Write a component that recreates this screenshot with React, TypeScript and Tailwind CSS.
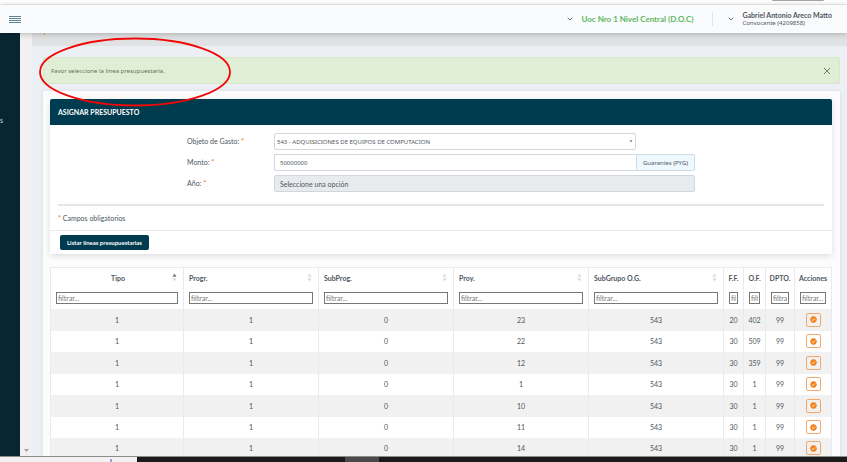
import { useState } from "react";

type Row = { ff: string; of: string; proy: string };

const rows: Row[] = [
  { proy: "23", ff: "20", of: "402" },
  { proy: "22", ff: "30", of: "509" },
  { proy: "12", ff: "30", of: "359" },
  { proy: "1", ff: "30", of: "1" },
  { proy: "10", ff: "30", of: "1" },
  { proy: "11", ff: "30", of: "1" },
  { proy: "14", ff: "30", of: "1" },
];

const columns = [
  { name: "Tipo", width: "w-[133px]", sort: "asc" },
  { name: "Progr.", width: "", sort: "none" },
  { name: "SubProg.", width: "", sort: "none" },
  { name: "Proy.", width: "", sort: "none" },
  { name: "SubGrupo O.G.", width: "", sort: "none" },
  { name: "F.F.", width: "w-5", sort: "" },
  { name: "O.F.", width: "w-[22px]", sort: "" },
  { name: "DPTO.", width: "w-[29px]", sort: "" },
  { name: "Acciones", width: "w-[37px]", sort: "" },
];

function Chevron() {
  return (
    <svg viewBox="0 0 6 4" className="h-1 w-1.5" fill="none" stroke="#6b7580" strokeWidth="1">
      <path d="M0.7 0.7 L3 3 L5.3 0.7" />
    </svg>
  );
}

function SortIcon({ active }: { active: boolean }) {
  return (
    <svg viewBox="0 0 5 9" className="h-[9px] w-[5px] shrink-0">
      <path d="M2.5 0.5 L4.5 3.8 H0.5 Z" fill={active ? "#6c757d" : "#dcdcdc"} />
      <path d="M2.5 8.5 L4.5 5.2 H0.5 Z" fill="#dcdcdc" />
    </svg>
  );
}

function CheckIcon() {
  return (
    <svg viewBox="0 0 14 14" className="h-[7px] w-[7px]">
      <path
        d="M7 0 L9.2 1 L11.7 1.8 L12.8 4.4 L14 7 L12.8 9.6 L11.7 12.2 L9.2 13 L7 14 L4.8 13 L2.3 12.2 L1.2 9.6 L0 7 L1.2 4.4 L2.3 1.8 L4.8 1 Z"
        fill="#f5821f"
      />
      <path d="M4 7.2 L6.2 9.3 L10.2 5" stroke="#fff" strokeWidth="1.5" fill="none" />
    </svg>
  );
}

function Label({ text, htmlFor }: { text: string; htmlFor: string }) {
  return (
    <label htmlFor={htmlFor} className="self-center font-['Lato',sans-serif] text-[7px] leading-2">
      {text}: <span className="font-bold text-[#f5821f]">*</span>
    </label>
  );
}

export default function App() {
  const [monto, setMonto] = useState("50000000");

  return (
    <div className="relative flex h-screen flex-col overflow-hidden bg-white font-['Noto_Sans','Open_Sans',sans-serif] text-[6px] leading-2 text-[#4f565e]">
      <div className="flex h-[5px] shrink-0 justify-end border-b border-[#f0f0f1] pr-[23px]">
        <div className="h-px w-[52px] rounded-b bg-[#a5a5a8]" />
      </div>

      <header className="z-10 flex h-7 shrink-0 items-center bg-[#fafbfd] pr-[15px] pl-[9px] shadow-[0_1px_6px_rgba(0,0,0,0.25)]">
        <button aria-label="Menú" className="flex w-3 flex-col gap-px">
          <span className="h-px bg-[#5f8494]" />
          <span className="h-px bg-[#5f8494]" />
          <span className="h-px bg-[#5f8494]" />
          <span className="h-px bg-[#5f8494]" />
        </button>
        <button className="ml-auto flex items-center gap-2 font-['Lato',sans-serif] text-[8px] font-bold text-[#5cb860]">
          <Chevron />
          Uoc Nro 1 Nivel Central (D.O.C)
        </button>
        <div className="ml-[19px] h-[14px] w-px bg-[#e0e3e8]" />
        <button className="ml-[15px] flex items-center gap-2 text-left">
          <Chevron />
          <span>
            <span className="block font-['Lato',sans-serif] text-[7px] leading-2 font-bold">
              Gabriel Antonio Areco Matto
            </span>
            <span className="block">Convocante (4209858)</span>
          </span>
        </button>
      </header>

      <div className="flex min-h-0 flex-1">
        <aside className="w-5 shrink-0 bg-[#082632] pt-[83px] text-[#d5dde1]">
          <p className="font-['Lato',sans-serif] text-[7px] leading-2">s</p>
        </aside>
        <div className="flex w-3 shrink-0 flex-col items-center justify-end bg-[#f1f1f1] pb-1">
          <svg viewBox="0 0 5 3" className="h-[3px] w-[5px]">
            <path d="M0 0 H5 L2.5 3 Z" fill="#a3a3a3" />
          </svg>
        </div>

        <main className="min-w-0 flex-1 overflow-hidden bg-[#ecf0f4]">
          <div className="h-[13px] bg-[#e1e2e4] pl-3">
            <div className="h-0.5 w-px bg-[#f5a25a]" />
          </div>

          <div className="mt-[11px] mr-[7px] ml-[11px]">
            <div className="flex h-[27px] items-center justify-between rounded-xs border border-[#d8e7ca] bg-[#e1eed6] pr-2 pl-[7px] text-[#5c7351]">
              <p>Favor seleccione la línea presupuestaria.</p>
              <button aria-label="Cerrar">
                <svg viewBox="0 0 8 8" className="h-2 w-2" stroke="#6f7d69" strokeWidth="1">
                  <path d="M1 1 L7 7 M7 1 L1 7" />
                </svg>
              </button>
            </div>

            <section className="mt-[7px] rounded-xs bg-[#fcfcfd] p-2 pl-[7px] shadow-[0_0_4px_rgba(0,0,0,0.08)]">
              <form className="bg-white shadow-[0_2px_6px_rgba(0,0,0,0.12)]" onSubmit={(e) => e.preventDefault()}>
                <h1 className="flex h-[26px] items-center rounded-t-xs bg-[#003c50] px-2 font-['Lato',sans-serif] text-[7px] leading-2 font-bold text-white">
                  ASIGNAR PRESUPUESTO
                </h1>

                <div className="grid grid-cols-[137fr_87fr_421fr_137fr] gap-y-1 pt-2">
                  <div className="col-start-2 self-center">
                    <Label text="Objeto de Gasto" htmlFor="objeto" />
                  </div>
                  <div className="grid w-[86%] items-center">
                    <select
                      id="objeto"
                      className="col-start-1 row-start-1 h-[17px] appearance-none rounded-xs border border-[#d3d8de] bg-white px-0.5"
                    >
                      <option>543 - ADQUISICIONES DE EQUIPOS DE COMPUTACION</option>
                    </select>
                    <svg
                      viewBox="0 0 4 3"
                      className="pointer-events-none col-start-1 row-start-1 mr-[3px] h-[3px] w-1 justify-self-end"
                    >
                      <path d="M0.5 0.3 H3.5 L2 2.5 Z" fill="#7b828a" />
                    </svg>
                  </div>

                  <div className="col-start-2 self-center">
                    <Label text="Monto" htmlFor="monto" />
                  </div>
                  <div className="flex h-[17px]">
                    <input
                      id="monto"
                      value={monto}
                      onChange={(e) => setMonto(e.target.value)}
                      className="min-w-0 flex-1 rounded-l-xs border border-r-0 border-[#d3d8de] bg-white px-[5px]"
                    />
                    <span className="flex w-[59px] items-center justify-center rounded-r-xs border border-[#cfdae4] bg-[#eef8ff]">
                      Guaraníes (PYG)
                    </span>
                  </div>

                  <div className="col-start-2 self-center">
                    <Label text="Año" htmlFor="anio" />
                  </div>
                  <select
                    id="anio"
                    disabled
                    className="h-[17px] appearance-none rounded-xs border border-[#d0d6db] bg-[#e8ebee] px-[5px] font-['Lato',sans-serif] text-[7px] leading-2 opacity-100"
                  >
                    <option>Seleccione una opción</option>
                  </select>
                </div>

                <hr className="mx-2 mt-3 border-t-2 border-[#e4e6e8]" />
                <p className="mx-2 mt-2 mb-2 font-['Lato',sans-serif] text-[7px] leading-2">
                  <span className="font-bold text-[#f5821f]">*</span> Campos obligatorios
                </p>
                <div className="border-t border-[#e9ebed] px-2.5 py-1">
                  <button className="flex h-[15px] items-center rounded-xs bg-[#003c50] px-[7px] font-['Lato',sans-serif] font-bold text-white">
                    Listar líneas presupuestarias
                  </button>
                </div>
              </form>

              <table className="mt-[13px] w-full table-fixed border-collapse border border-[#e8eaec] bg-white font-['Lato',sans-serif] text-[7px] leading-2">
                <thead>
                  <tr className="h-5">
                    {columns.map((c) => (
                      <th key={c.name} className={`border-x border-[#e8eaec] px-0 ${c.width}`}>
                        {c.sort ? (
                          <div className="flex items-center pr-1.5 pl-[5px]">
                            <span className={c.name === "Tipo" ? "flex-1 pl-2 text-center" : "flex-1 text-left"}>
                              {c.name}
                            </span>
                            <SortIcon active={c.sort === "asc"} />
                          </div>
                        ) : (
                          c.name
                        )}
                      </th>
                    ))}
                  </tr>
                  <tr className="h-[21px]">
                    {columns.map((c) => (
                      <td key={c.name} className="border-x border-[#e8eaec] p-0">
                        <div className="flex px-[5px]">
                          <input
                            aria-label={`Filtrar ${c.name}`}
                            placeholder="filtrar..."
                            className="h-3 w-full min-w-0 border border-[#777] bg-white px-px placeholder:text-[#757575]"
                          />
                        </div>
                      </td>
                    ))}
                  </tr>
                </thead>
                <tbody>
                  {rows.map((r) => (
                    <tr key={r.proy} className="text-center odd:h-[22px] odd:bg-[#f1f1f1] even:h-[21px]">
                      {["1", "1", "0", r.proy, "543", r.ff, r.of, "99"].map((v, i) => (
                        <td key={i} className="border-x border-[#e8eaec] p-0">
                          {v}
                        </td>
                      ))}
                      <td className="border-x border-[#e8eaec] p-0">
                        <button
                          aria-label="Seleccionar"
                          className="mx-auto flex h-[14px] w-[15px] items-center justify-center rounded-xs border border-[#f7a869]"
                        >
                          <CheckIcon />
                        </button>
                      </td>
                    </tr>
                  ))}
                </tbody>
              </table>
            </section>
          </div>
        </main>
      </div>

      <footer className="z-10 flex h-1.5 shrink-0 border-t border-[#8c8c8c] bg-[#1b1a1b]">
        <div className="flex w-[137px] justify-end bg-[#f2f2f2] pr-[25px]">
          <div className="mt-0.5 w-0.5 bg-[#9aa3c8]" />
        </div>
        <div className="ml-[208px] w-[34px] bg-[#4a4a4a]" />
      </footer>

      <svg viewBox="0 0 192 70" className="pointer-events-none absolute top-[37px] left-[39px] z-20 h-[70px] w-[192px]">
        <ellipse cx="96" cy="35" rx="95" ry="33.5" fill="none" stroke="#f00808" strokeWidth="1.8" />
      </svg>
    </div>
  );
}
